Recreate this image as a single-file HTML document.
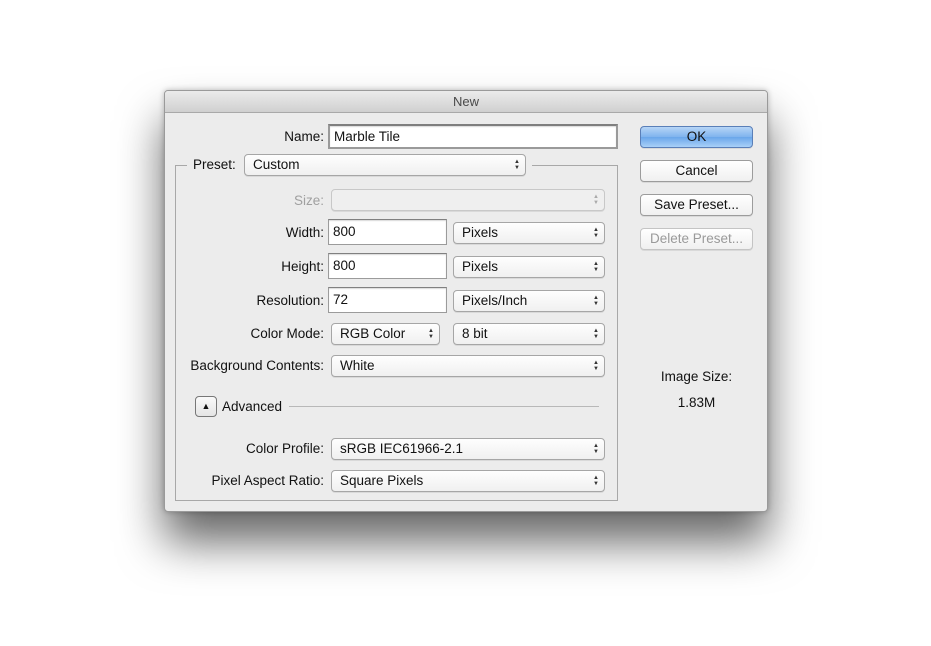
<!DOCTYPE html>
<html><head><meta charset="utf-8"><style>
*{box-sizing:border-box;margin:0;padding:0}
body{width:931px;height:646px;background:#fff;position:relative;overflow:hidden;font-family:"Liberation Sans",sans-serif;font-size:13.5px;color:#111}
.dlg{position:absolute;left:164px;top:90px;width:604px;height:422px;background:#ececec;border:1px solid #9a9a9a;border-radius:4px;box-shadow:0 30px 45px rgba(0,0,0,0.6),0 0 6px rgba(0,0,0,0.25);overflow:hidden}
.title{position:absolute;left:0;top:0;width:100%;height:22px;background:linear-gradient(#ebebeb,#d0d0d0);border-bottom:1px solid #a9a9a9;text-align:center;line-height:22px;color:#4a4a4a;font-size:13px}
.a{position:absolute}
.lbl{position:absolute;text-align:right;width:200px;line-height:20px}
.inp{position:absolute;background:#fff;border:1px solid #9b9b9b;border-top-color:#808080;padding-left:4px;line-height:24px;box-shadow:inset 0 1px 1px rgba(0,0,0,0.15)}
.sel{position:absolute;background:linear-gradient(#fefefe,#f0f0f0);border:1px solid #a6a6a6;border-radius:4px;padding-left:8px;line-height:20px;box-shadow:0 1px 0 rgba(0,0,0,0.08)}
.arr{position:absolute;right:5px;top:4px;font-size:6px;line-height:6px;color:#333;text-align:center}
.sel.dis{border-color:#c8c8c8;background:#efefef}
.sel.dis .arr{color:#aaa}
.btn{position:absolute;left:475px;width:113px;height:22px;border:1px solid #9c9c9c;border-radius:4px;background:linear-gradient(#fff,#f0f0f0);text-align:center;line-height:20px;box-shadow:0 1px 0 rgba(0,0,0,0.08)}
.fs{position:absolute;left:10px;top:74px;width:443px;height:336px;border:1px solid #a8a8a8}
</style></head><body>
<div class="dlg">
<div class="title">New</div>
<div class="fs"></div>
<div class="lbl" style="left:-41px;top:36px">Name:</div>
<div class="inp" style="left:163px;top:33px;width:290px;height:25px;border:2px solid #9a9a9a;border-top-color:#7f7f7f;line-height:21px">Marble Tile</div>
<div class="a" style="left:22px;top:64px;width:58px;height:20px;background:#ececec;padding-left:6px;line-height:20px">Preset:</div>
<div class="sel" style="left:79px;top:63px;width:282px;height:22px;line-height:20px">Custom<span class="arr">▲<br>▼</span></div>
<div class="a" style="left:361px;top:70px;width:6px;height:10px;background:#ececec"></div>
<div class="lbl" style="left:-41px;top:100px;color:#a0a0a0">Size:</div>
<div class="sel dis" style="left:166px;top:98px;width:274px;height:22px"><span class="arr">▲<br>▼</span></div>
<div class="lbl" style="left:-41px;top:132px">Width:</div>
<div class="inp" style="left:163px;top:128px;width:119px;height:26px">800</div>
<div class="sel" style="left:288px;top:131px;width:152px;height:22px">Pixels<span class="arr">▲<br>▼</span></div>
<div class="lbl" style="left:-41px;top:166px">Height:</div>
<div class="inp" style="left:163px;top:162px;width:119px;height:26px">800</div>
<div class="sel" style="left:288px;top:165px;width:152px;height:22px">Pixels<span class="arr">▲<br>▼</span></div>
<div class="lbl" style="left:-41px;top:200px">Resolution:</div>
<div class="inp" style="left:163px;top:196px;width:119px;height:26px">72</div>
<div class="sel" style="left:288px;top:199px;width:152px;height:22px">Pixels/Inch<span class="arr">▲<br>▼</span></div>
<div class="lbl" style="left:-41px;top:233px">Color Mode:</div>
<div class="sel" style="left:166px;top:232px;width:109px;height:22px">RGB Color<span class="arr">▲<br>▼</span></div>
<div class="sel" style="left:288px;top:232px;width:152px;height:22px">8 bit<span class="arr">▲<br>▼</span></div>
<div class="lbl" style="left:-41px;top:265px">Background Contents:</div>
<div class="sel" style="left:166px;top:264px;width:274px;height:22px">White<span class="arr">▲<br>▼</span></div>
<div class="a" style="left:30px;top:305px;width:22px;height:21px;border:1px solid #777;border-radius:4px;background:linear-gradient(#fafafa,#e4e4e4);text-align:center;font-size:9px;line-height:19px">▲</div>
<div class="a" style="left:57px;top:306px;line-height:20px">Advanced</div>
<div class="a" style="left:124px;top:315px;width:310px;height:1px;background:#b8b8b8"></div>
<div class="lbl" style="left:-41px;top:348px">Color Profile:</div>
<div class="sel" style="left:166px;top:347px;width:274px;height:22px">sRGB IEC61966-2.1<span class="arr">▲<br>▼</span></div>
<div class="lbl" style="left:-41px;top:380px">Pixel Aspect Ratio:</div>
<div class="sel" style="left:166px;top:379px;width:274px;height:22px">Square Pixels<span class="arr">▲<br>▼</span></div>
<div class="btn" style="top:35px;background:linear-gradient(#b7d5f6,#7fb3ee 50%,#6aa6ea 51%,#a9d0f8);border-color:#5a7fb8">OK</div>
<div class="btn" style="top:69px">Cancel</div>
<div class="btn" style="top:103px">Save Preset...</div>
<div class="btn" style="top:137px;color:#9a9a9a;border-color:#c4c4c4">Delete Preset...</div>
<div class="a" style="left:455px;top:278px;width:153px;text-align:center">Image Size:</div>
<div class="a" style="left:455px;top:304px;width:153px;text-align:center">1.83M</div>
</div>
</body></html>
